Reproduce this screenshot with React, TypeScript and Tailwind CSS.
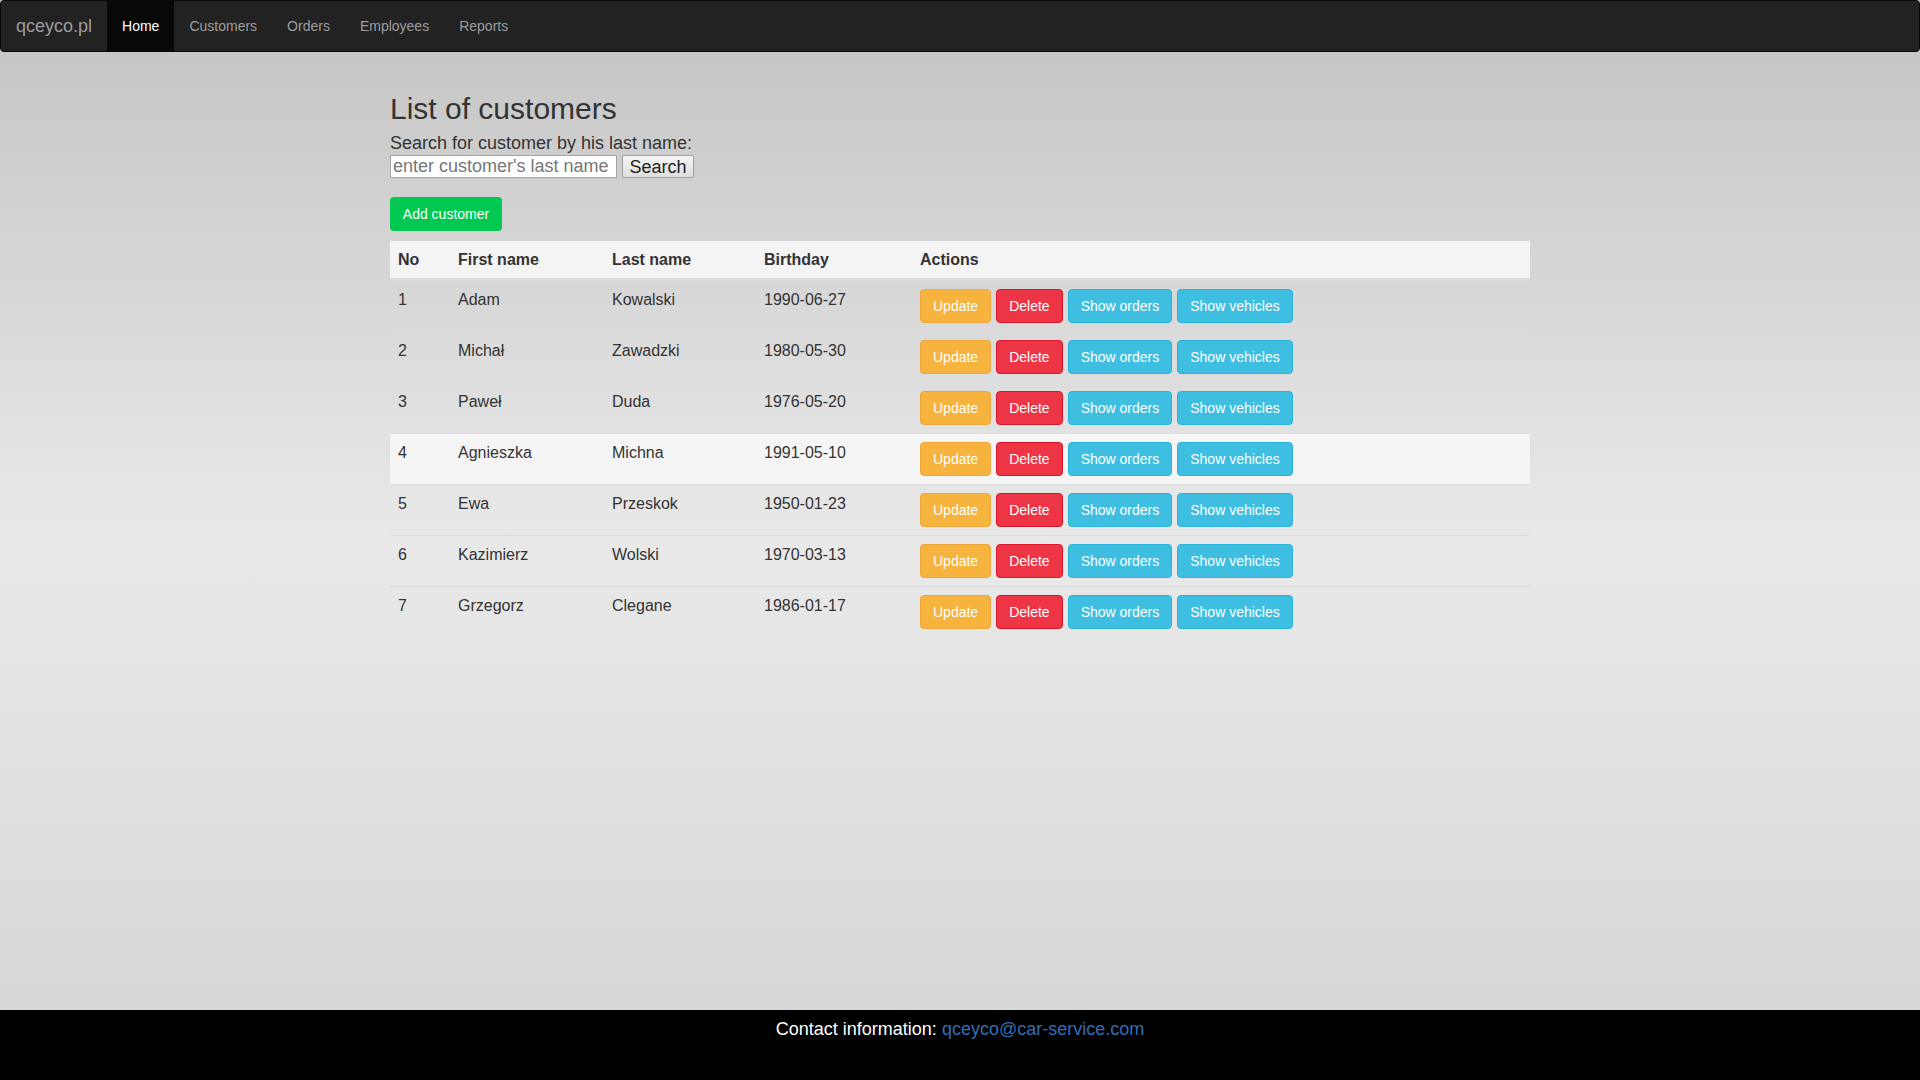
import React from 'react';

const customers = [
  { no: 1, first: 'Adam', last: 'Kowalski', birthday: '1990-06-27' },
  { no: 2, first: 'Michał', last: 'Zawadzki', birthday: '1980-05-30' },
  { no: 3, first: 'Paweł', last: 'Duda', birthday: '1976-05-20' },
  { no: 4, first: 'Agnieszka', last: 'Michna', birthday: '1991-05-10' },
  { no: 5, first: 'Ewa', last: 'Przeskok', birthday: '1950-01-23' },
  { no: 6, first: 'Kazimierz', last: 'Wolski', birthday: '1970-03-13' },
  { no: 7, first: 'Grzegorz', last: 'Clegane', birthday: '1986-01-17' },
];

const navLinks = ['Home', 'Customers', 'Orders', 'Employees', 'Reports'];

const btn = 'h-[34px] px-[12px] text-[14px] leading-[20px] text-white border rounded-[4px]';
const th = 'p-[8px] text-left font-bold leading-[21px] border-b-2 border-[#ddd]';
const td = 'p-[8px] align-top leading-[21px] border-t border-[#ddd]';

export default function App() {
  return (
    <div className="min-h-screen flex flex-col font-['Liberation_Sans',Arial,sans-serif] text-[14px] leading-[20px] text-[#333] bg-[linear-gradient(to_bottom,#c3c3c3,#e9e9e9_50%,#d5d5d5)]">
      {/* Navbar */}
      <nav className="h-[52px] bg-[#222] border border-[#080808] rounded-[4px] flex items-stretch">
        <a className="px-[15px] flex items-center text-[18px] text-[#9d9d9d]">qceyco.pl</a>
        {navLinks.map((l, i) => (
          <a
            key={l}
            className={
              i === 0
                ? 'px-[15px] flex items-center text-white bg-[#080808]'
                : 'px-[15px] flex items-center text-[#9d9d9d]'
            }
          >
            {l}
          </a>
        ))}
      </nav>

      <main className="flex-1">
        <div className="w-[1140px] mx-auto pt-[40px]">
          <h2 className="text-[30px] leading-[33px]">List of customers</h2>
          <div className="mt-[6px] text-[18px] leading-[24px]">Search for customer by his last name:</div>
          <div className="flex gap-[5px]">
            <input
              className="w-[227px] h-[23px] bg-white border border-[#a5a5a5] px-[2px] text-[18px] text-[#333] placeholder:text-[#777] outline-none"
              placeholder="enter customer's last name"
            />
            <button className="w-[72px] h-[23px] border border-[#a0a0a0] rounded-[2px] bg-[linear-gradient(to_bottom,#f6f6f6,#dedede)] text-[18px] leading-[20px] text-[#222]">
              Search
            </button>
          </div>

          <button className="mt-[19px] h-[34px] w-[112px] rounded-[4px] bg-[#00c851] text-white text-[14px]">
            Add customer
          </button>

          <table className="mt-[10px] w-full table-fixed border-separate border-spacing-0 text-[16px]">
            <thead>
              <tr className="bg-[#f4f4f4]">
                <th className={`w-[60px] ${th}`}>No</th>
                <th className={`w-[154px] ${th}`}>First name</th>
                <th className={`w-[152px] ${th}`}>Last name</th>
                <th className={`w-[156px] ${th}`}>Birthday</th>
                <th className={th}>Actions</th>
              </tr>
            </thead>
            <tbody>
              {customers.map((c) => (
                <tr key={c.no} className={c.no === 4 ? 'bg-[#f5f5f5]' : ''}>
                  <td className={td}>{c.no}</td>
                  <td className={td}>{c.first}</td>
                  <td className={td}>{c.last}</td>
                  <td className={td}>{c.birthday}</td>
                  <td className={td}>
                    <div className="flex gap-[5px]">
                      <button className={`${btn} bg-[#f6b33d] border-[#eea53a]`}>Update</button>
                      <button className={`${btn} bg-[#ed3546] border-[#d9152a]`}>Delete</button>
                      <button className={`${btn} bg-[#3ebfe2] border-[#28b3da]`}>Show orders</button>
                      <button className={`${btn} bg-[#3ebfe2] border-[#28b3da]`}>Show vehicles</button>
                    </div>
                  </td>
                </tr>
              ))}
            </tbody>
          </table>
        </div>
      </main>

      {/* Footer */}
      <footer className="h-[70px] bg-black text-center pt-[6px] text-[18px] leading-[26px] text-white">
        Contact information: <a className="text-[#2f6fb7]">qceyco@car-service.com</a>
      </footer>
    </div>
  );
}
